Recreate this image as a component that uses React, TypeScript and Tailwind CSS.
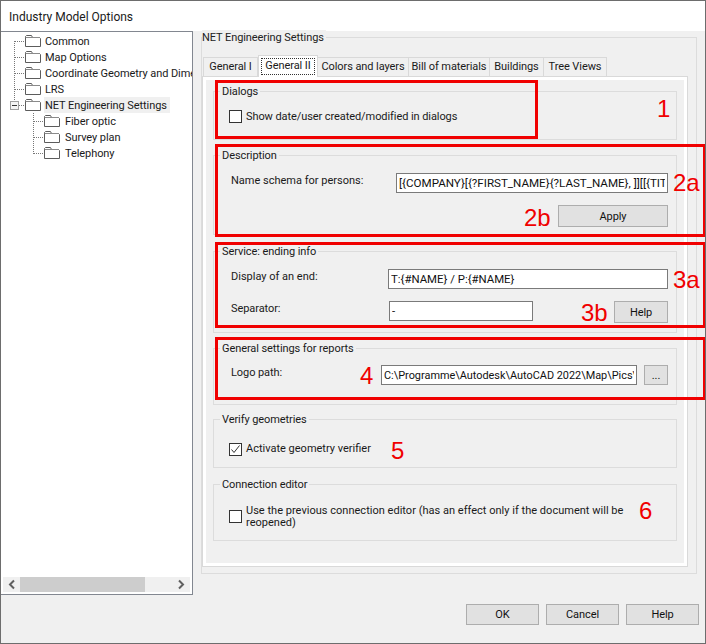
import React from 'react';

const font = 'font-["Roboto","Noto_Sans",sans-serif]';

const treeItems = [
  { label: 'Common', child: false },
  { label: 'Map Options', child: false },
  { label: 'Coordinate Geometry and Dimensions', child: false },
  { label: 'LRS', child: false },
  { label: 'NET Engineering Settings', child: false, selected: true },
  { label: 'Fiber optic', child: true },
  { label: 'Survey plan', child: true },
  { label: 'Telephony', child: true },
];

const tabs = [
  { label: 'General I', width: 'w-[55px]' },
  { label: 'General II', width: 'w-[60px]', active: true },
  { label: 'Colors and layers', width: 'w-[91px]' },
  { label: 'Bill of materials', width: 'w-[81px]' },
  { label: 'Buildings', width: 'w-[54px]' },
  { label: 'Tree Views', width: 'w-[63px]' },
];

const Folder: React.FC = () => (
  <svg width="16" height="12" viewBox="0 0 16 12" className="shrink-0">
    <path d="M0.5 11.5V1.5L1.5 0.5H6.5L7.5 2.5H14.5L15.5 3.5V11.5Z" fill="#fff" stroke="#5c5c5c" />
    <path d="M0.5 2.5H14.5" stroke="#8a8a8a" />
  </svg>
);

const TreeLines: React.FC = () => (
  <svg width="70" height="130" className="absolute left-0 top-0" fill="none" stroke="#777" strokeDasharray="1 1">
    <path d="M12.5 9V69" />
    <path d="M13 9.5H23M13 25.5H23M13 41.5H23M13 57.5H23M17 73.5H23" />
    <path d="M31.5 81V122" />
    <path d="M32 89.5H42M32 105.5H42M32 121.5H42" />
    <rect x="8.5" y="69.5" width="8" height="8" fill="#f4f4f4" stroke="#a0a0a0" strokeDasharray="none" />
    <path d="M10 73.5H15" stroke="#333" strokeDasharray="none" />
  </svg>
);

const Group: React.FC<{ title: string; className: string; children: React.ReactNode }> = ({ title, className, children }) => (
  <div className={`relative border border-[#dcdcdc] ${className}`}>
    <span className="absolute -top-[8px] left-[6px] bg-[#f0f0f0] px-[2px] leading-[16px]">{title}</span>
    {children}
  </div>
);

const Checkbox: React.FC<{ checked?: boolean }> = ({ checked }) => (
  <span className="flex h-[13px] w-[13px] shrink-0 items-center justify-center border border-[#333] bg-white">
    {checked && (
      <svg width="11" height="11" viewBox="0 0 11 11" fill="none" stroke="#333">
        <path d="M1.5 5.5L4 8.5L9.5 1.5" />
      </svg>
    )}
  </span>
);

const Btn: React.FC<{ label: string; className: string }> = ({ label, className }) => (
  <button className={`flex items-center justify-center border border-[#adadad] bg-[#e1e1e1] leading-none text-[#111] ${className}`}>
    {label}
  </button>
);

const Field: React.FC<{ value: string; className: string }> = ({ value, className }) => (
  <input
    readOnly
    value={value}
    className={`h-[20px] border border-[#7a7a7a] bg-white px-[2px] tracking-normal text-[#111] outline-none ${className}`}
  />
);

const Mark: React.FC<{ className: string; children: React.ReactNode }> = ({ className, children }) => (
  <span className={`absolute font-["Liberation_Sans",sans-serif] text-[24px] leading-none tracking-normal text-[#f00000] ${className}`}>{children}</span>
);

const Box: React.FC<{ className: string }> = ({ className }) => (
  <div className={`pointer-events-none absolute border-[3px] border-[#f00000] ${className}`} />
);

const App: React.FC = () => {
  return (
    <div className={`relative flex h-[644px] w-[706px] flex-col overflow-hidden border border-[#6d6d6d] bg-[#f0f0f0] text-[11px] tracking-[-0.08px] text-[#1a1a1a] ${font}`}>
      {/* Title bar */}
      <div className="flex h-[30px] shrink-0 items-center bg-white pl-[8px] pt-[1px] text-[12px] tracking-normal">Industry Model Options</div>

      <div className="flex min-h-0 flex-1">
        {/* Tree */}
        <div className="flex h-[564px] w-[192px] shrink-0 flex-col border border-l-0 border-[#828790] bg-white pl-[1px]">
          <div className="relative flex-1 overflow-hidden pt-[1px]">
            <TreeLines />
            {treeItems.map((item) => (
              <div key={item.label} className={`relative flex h-[16px] items-center ${item.child ? 'gap-[5px] pl-[42px]' : 'gap-[4px] pl-[23px]'}`}>
                <Folder />
                <span className={`flex h-full items-center whitespace-nowrap pt-[2px] ${item.selected ? '-ml-[1px] bg-[#f0f0f0] pl-[1px] pr-[3px]' : ''}`}>{item.label}</span>
              </div>
            ))}
          </div>
          {/* Scrollbar */}
          <div className="mb-[2px] mr-[2px] ml-[1px] flex h-[15px] items-center bg-[#f0f0f0]">
            <svg width="17" height="15" viewBox="0 0 17 15" className="shrink-0" fill="none" stroke="#606060" strokeWidth="2">
              <path d="M11 3.5L7 7.5L11 11.5" />
            </svg>
            <div className="h-[15px] w-[125px] bg-[#cdcdcd]" />
            <div className="flex-1" />
            <svg width="17" height="15" viewBox="0 0 17 15" className="shrink-0" fill="none" stroke="#606060" strokeWidth="2">
              <path d="M6 3.5L10 7.5L6 11.5" />
            </svg>
          </div>
        </div>

        {/* Right side */}
        <div className="relative flex-1 pl-[8px]">
          <div className="relative mt-[6px] h-[537px] w-[496px] border border-[#dcdcdc]">
            <span className="absolute -top-[8px] left-0 bg-[#f0f0f0] pr-[2px] leading-[16px] text-[#222]">NET Engineering Settings</span>

            {/* Tabs */}
            <div className="ml-[1px] mt-[19px] flex h-[19px] items-end whitespace-nowrap">
              {tabs.map((tab) => (
                <div
                  key={tab.label}
                  className={
                    tab.active
                      ? `z-10 -mb-[1px] flex h-[22px] ${tab.width} items-center justify-center border border-b-0 border-[#d9d9d9] bg-white pb-[1px]`
                      : `flex h-[19px] ${tab.width} items-center justify-center border border-l-0 border-b-0 border-[#d9d9d9] bg-[#f0f0f0] pt-[1px] first:border-l`
                  }
                >
                  {tab.active ? (
                    <span className="flex h-[17px] w-[54px] items-center justify-center border border-dotted border-[#333]">{tab.label}</span>
                  ) : (
                    tab.label
                  )}
                </div>
              ))}
            </div>

            {/* Tab page */}
            <div className="h-[491px] w-[486px] border border-[#d9d9d9] bg-white p-[3px]">
              <div className="h-full bg-[#f0f0f0] px-[7px] pt-[11px]">
                <Group title="Dialogs" className="h-[49px]">
                  <div className="flex items-center gap-[4px] pl-[15px] pt-[16px]">
                    <Checkbox />
                    <span className="pt-[1px]">Show date/user created/modified in dialogs</span>
                  </div>
                </Group>

                <Group title="Description" className="mt-[15px] h-[80px]">
                  <div className="flex items-center justify-between pl-[17px] pr-[8px] pt-[17px]">
                    <span className="-mt-[4px] tracking-normal">Name schema for persons:</span>
                    <Field value="[{COMPANY}[{?FIRST_NAME}{?LAST_NAME}, ]][[{TITLE}" className="w-[272px] text-[11.6px]" />
                  </div>
                  <div className="flex justify-end pr-[8px] pt-[12px]">
                    <Btn label="Apply" className="h-[22px] w-[110px]" />
                  </div>
                </Group>

                <Group title="Service: ending info" className="mt-[16px] h-[82px]">
                  <div className="flex items-center justify-between pl-[17px] pr-[8px] pt-[17px]">
                    <span className="-mt-[3px] tracking-normal">Display of an end:</span>
                    <Field value="T:{#NAME} / P:{#NAME}" className="w-[280px] text-[11.4px]" />
                  </div>
                  <div className="flex items-start pl-[17px] pr-[8px] pt-[12px]">
                    <span className="w-[158px] pt-[1px] leading-[14px]">Separator:</span>
                    <Field value="-" className="w-[144px] text-[11.4px]" />
                    <Btn label="Help" className="ml-auto h-[22px] w-[54px]" />
                  </div>
                </Group>

                <Group title="General settings for reports" className="mt-[15px] h-[57px]">
                  <div className="flex items-start pl-[17px] pt-[16px]">
                    <span className="w-[150px] pt-[1px] leading-[14px]">Logo path:</span>
                    <Field value="C:\Programme\Autodesk\AutoCAD 2022\Map\Pics\Logo.bmp" className="w-[256px] text-[10.9px]" />
                    <Btn label="..." className="ml-[7px] h-[20px] w-[24px]" />
                  </div>
                </Group>

                <Group title="Verify geometries" className="mt-[14px] h-[49px]">
                  <div className="flex items-center gap-[4px] pl-[15px] pt-[22px]">
                    <Checkbox checked />
                    <span className="-mt-[1px] tracking-normal">Activate geometry verifier</span>
                  </div>
                </Group>

                <Group title="Connection editor" className="mt-[16px] h-[57px]">
                  <div className="flex items-center gap-[4px] pl-[15px] pt-[19px]">
                    <Checkbox />
                    <span className="w-[385px] pt-[1px] leading-[12px] tracking-[0.02px]">
                      Use the previous connection editor (has an effect only if the document will be reopened)
                    </span>
                  </div>
                </Group>
              </div>
            </div>
          </div>
        </div>
      </div>

      {/* Footer */}
      <div className="absolute bottom-[18px] right-[6px] flex gap-[7px]">
        <Btn label="OK" className="h-[21px] w-[73px]" />
        <Btn label="Cancel" className="h-[21px] w-[73px]" />
        <Btn label="Help" className="h-[21px] w-[73px]" />
      </div>

      {/* Red annotations */}
      <Box className="left-[214px] top-[79px] h-[59px] w-[323px]" />
      <Box className="left-[214px] top-[143px] h-[93px] w-[491px]" />
      <Box className="left-[214px] top-[241px] h-[86px] w-[491px]" />
      <Box className="left-[214px] top-[336px] h-[63px] w-[491px]" />
      <Mark className="left-[656px] top-[96px]">1</Mark>
      <Mark className="left-[672px] top-[170px]">2a</Mark>
      <Mark className="left-[523px] top-[205px]">2b</Mark>
      <Mark className="left-[672px] top-[267px]">3a</Mark>
      <Mark className="left-[580px] top-[300px]">3b</Mark>
      <Mark className="left-[359px] top-[363px]">4</Mark>
      <Mark className="left-[390px] top-[438px]">5</Mark>
      <Mark className="left-[638px] top-[498px]">6</Mark>
    </div>
  );
};

export default App;
